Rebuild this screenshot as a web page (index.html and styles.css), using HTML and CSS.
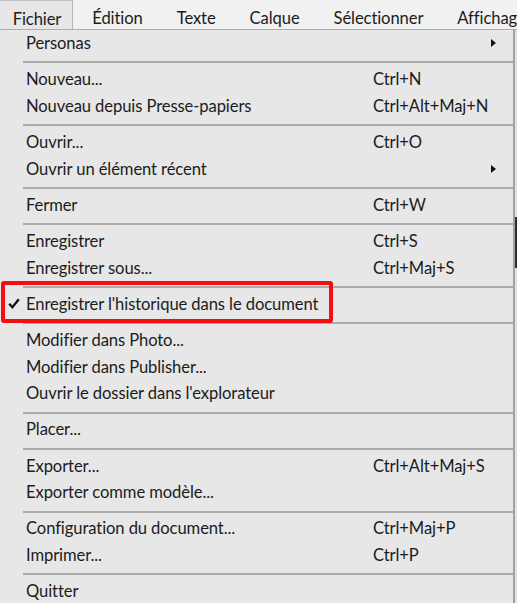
FILE: index.html
```html
<!DOCTYPE html>
<html lang="fr">
<head>
  <meta charset="UTF-8" />
  <title>Fichier</title>
  <link rel="stylesheet" href="styles.css">
</head>
<body>
  <div class="menubar">
    <span class="menubar-item active">Fichier</span>
    <span class="menubar-item">Édition</span>
    <span class="menubar-item">Texte</span>
    <span class="menubar-item">Calque</span>
    <span class="menubar-item">Sélectionner</span>
    <span class="menubar-item">Affichage</span>
  </div>

  <div class="workspace">
    <div class="menu">
      <div class="item"><span class="label">Personas</span><span class="arrow"></span></div>
      <div class="separator"></div>
      <div class="item"><span class="label">Nouveau...</span><span class="shortcut">Ctrl+N</span></div>
      <div class="item"><span class="label">Nouveau depuis Presse-papiers</span><span class="shortcut">Ctrl+Alt+Maj+N</span></div>
      <div class="separator"></div>
      <div class="item"><span class="label">Ouvrir...</span><span class="shortcut">Ctrl+O</span></div>
      <div class="item"><span class="label">Ouvrir un élément récent</span><span class="arrow"></span></div>
      <div class="separator"></div>
      <div class="item"><span class="label">Fermer</span><span class="shortcut">Ctrl+W</span></div>
      <div class="separator"></div>
      <div class="item"><span class="label">Enregistrer</span><span class="shortcut">Ctrl+S</span></div>
      <div class="item"><span class="label">Enregistrer sous...</span><span class="shortcut">Ctrl+Maj+S</span></div>
      <div class="separator"></div>
      <div class="item checked highlighted">
        <span class="check">
          <svg width="12" height="11" viewBox="0 0 12 11"><path d="M1.2 5.8 L4.4 9.2 L10.8 1.2" fill="none" stroke="#111" stroke-width="2.3"/></svg>
        </span>
        <span class="label">Enregistrer l'historique dans le document</span>
      </div>
      <div class="separator"></div>
      <div class="item"><span class="label">Modifier dans Photo...</span></div>
      <div class="item"><span class="label">Modifier dans Publisher...</span></div>
      <div class="item"><span class="label">Ouvrir le dossier dans l'explorateur</span></div>
      <div class="separator"></div>
      <div class="item"><span class="label">Placer...</span></div>
      <div class="separator"></div>
      <div class="item"><span class="label">Exporter...</span><span class="shortcut">Ctrl+Alt+Maj+S</span></div>
      <div class="item"><span class="label">Exporter comme modèle...</span></div>
      <div class="separator"></div>
      <div class="item"><span class="label">Configuration du document...</span><span class="shortcut">Ctrl+Maj+P</span></div>
      <div class="item"><span class="label">Imprimer...</span><span class="shortcut">Ctrl+P</span></div>
      <div class="separator"></div>
      <div class="item"><span class="label">Quitter</span></div>
    </div>
    <div class="backdrop">
      <div class="scroll-thumb"></div>
    </div>
  </div>
</body>
</html>
```

FILE: styles.css
```css
* {
  margin: 0;
  padding: 0;
  box-sizing: border-box;
}

body {
  font-family: 'Lato', 'Noto Sans', sans-serif;
  font-size: 16.6px;
  letter-spacing: -0.1px;
  color: #1c1c1c;
  background: #e4e4e4;
  width: 517px;
  height: 603px;
  overflow: hidden;
}

/* Menu bar */
.menubar {
  display: flex;
  height: 30px;
  background: #f1f1f1;
  border-bottom: 1px solid #adadad;
  white-space: nowrap;
  overflow: hidden;
}

.menubar-item {
  display: flex;
  align-items: center;
  padding: 7px 17px 0;
  line-height: 1;
}

.menubar-item.active {
  background: #e7e7e7;
  border-top: 1px solid #c4c4c4;
  border-right: 1px solid #b4b4b4;
  margin-bottom: -1px;
  padding: 7px 11px 0 12.7px;
  margin-right: 2px;
}

/* Workspace under the bar */
.workspace {
  display: flex;
  height: 573px;
}

.menu {
  width: 515px;
  flex-shrink: 0;
  background: #e7e7e7;
  border-right: 2px solid #a2a2a2;
}

.item {
  position: relative;
  display: grid;
  grid-template-columns: 26px 347px 1fr 24px;
  align-items: center;
  height: 26.8px;
  padding-bottom: 1px;
  white-space: nowrap;
}

.check {
  grid-column: 1;
  display: flex;
  justify-content: center;
  padding-left: 1px;
}

.check svg {
  display: block;
}

.label {
  grid-column: 2;
}

.shortcut {
  grid-column: 3;
}

.arrow {
  grid-column: 4;
  width: 0;
  height: 0;
  margin-left: 2px;
  border-top: 4.5px solid transparent;
  border-bottom: 4.5px solid transparent;
  border-left: 5.5px solid #111;
}

.separator {
  height: 2px;
  margin: 4.4px 0 2.9px 23px;
  background: #ababab;
}

/* Red annotation around the checked entry */
.highlighted::after {
  content: "";
  box-sizing: border-box;
  position: absolute;
  left: 1px;
  top: -10px;
  width: 332px;
  height: 42px;
  border: 4px solid #f20f0f;
  border-radius: 3px;
}

.backdrop {
  flex: 1;
  background: #e2e2e2;
}

.scroll-thumb {
  width: 100%;
  height: 51px;
  margin-top: 187px;
  background: #2e2e2e;
}
```
